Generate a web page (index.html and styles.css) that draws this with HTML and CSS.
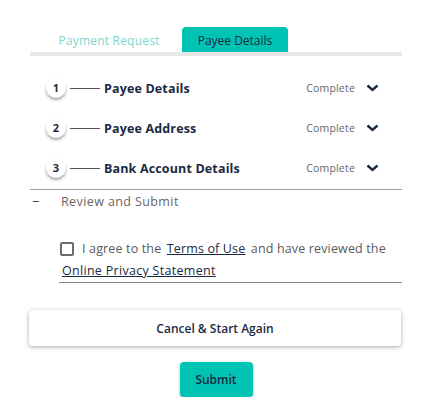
FILE: index.html
```html
<!DOCTYPE html>
<html lang="en">
<head>
  <meta charset="UTF-8">
  <meta name="viewport" content="width=device-width, initial-scale=1.0">
  <title>Payee Details</title>
  <link rel="stylesheet" href="styles.css">
</head>
<body>
  <div class="page">
    <div class="tabs">
      <div class="tab">Payment Request</div>
      <div class="tab active">Payee Details</div>
    </div>
    <div class="tab-bar"></div>

    <div class="steps">
      <div class="step">
        <span class="step-num">1</span>
        <span class="step-line"></span>
        <span class="step-title">Payee Details</span>
        <span class="step-status">Complete</span>
        <svg class="chevron" width="13" height="8" viewBox="0 0 13 8"><path d="M1.5 1.5 L6.5 6 L11.5 1.5" fill="none" stroke="#1b2a41" stroke-width="2.4"/></svg>
      </div>
      <div class="step">
        <span class="step-num">2</span>
        <span class="step-line"></span>
        <span class="step-title">Payee Address</span>
        <span class="step-status">Complete</span>
        <svg class="chevron" width="13" height="8" viewBox="0 0 13 8"><path d="M1.5 1.5 L6.5 6 L11.5 1.5" fill="none" stroke="#1b2a41" stroke-width="2.4"/></svg>
      </div>
      <div class="step">
        <span class="step-num">3</span>
        <span class="step-line"></span>
        <span class="step-title">Bank Account Details</span>
        <span class="step-status">Complete</span>
        <svg class="chevron" width="13" height="8" viewBox="0 0 13 8"><path d="M1.5 1.5 L6.5 6 L11.5 1.5" fill="none" stroke="#1b2a41" stroke-width="2.4"/></svg>
      </div>
    </div>

    <div class="review">
      <span class="dash">&minus;</span>
      <span>Review and Submit</span>
    </div>

    <div class="agree">
      <span class="checkbox"></span><span class="agree-text">I agree to the <a href="#">Terms of Use</a> and have reviewed the</span><br>
      <a href="#" class="privacy">Online Privacy Statement</a>
    </div>

    <button class="btn-cancel">Cancel &amp; Start Again</button>
    <div class="submit-row">
      <button class="btn-submit">Submit</button>
    </div>
  </div>
</body>
</html>
```

FILE: styles.css
```css
body {
  margin: 0;
  background: #fff;
  font-family: "Open Sans", "Noto Sans", sans-serif;
  color: #1b2a41;
}
.page {
  padding: 0 28px 0 30px;
}
.tabs {
  display: flex;
  gap: 20px;
  padding: 27px 0 0 26px;
}
.tab {
  width: 106px;
  height: 25px;
  line-height: 27px;
  text-align: center;
  font-size: 12px;
  letter-spacing: 0.2px;
  color: #7fd5c9;
}
.tab.active {
  background: #00c4b3;
  color: #1b2a41;
  letter-spacing: 0;
  border-radius: 4px 4px 0 0;
}
.tab-bar {
  height: 4px;
  background: #e8e8e8;
}
.steps {
  margin-top: 12px;
  border-bottom: 1px solid #9e9e9e;
  padding-bottom: 1px;
}
.step {
  display: flex;
  align-items: center;
  height: 40px;
  padding: 0 23px 0 16px;
}
.step-num {
  width: 20px;
  height: 20px;
  border-radius: 50%;
  background: #fff;
  box-shadow: 0 2px 3px rgba(0, 0, 0, 0.35);
  font-size: 11px;
  font-weight: 700;
  text-align: center;
  line-height: 19px;
}
.step-line {
  width: 30px;
  height: 1px;
  background: #555;
  margin: 0 4px;
}
.step-title {
  flex: 1;
  font-size: 12.5px;
  font-weight: 700;
  letter-spacing: 0.15px;
}
.step-status {
  font-size: 10.5px;
  letter-spacing: 0.2px;
  color: #5f6570;
  margin-right: 11px;
}
.chevron {
  display: block;
}
.review {
  display: flex;
  align-items: center;
  height: 21px;
  margin-top: 1px;
  font-size: 12.5px;
  letter-spacing: 0.4px;
  color: #6b6560;
}
.dash {
  width: 29px;
  color: #1b2a41;
  padding-left: 2px;
}
.agree {
  margin: 26px 0 0 29px;
  font-size: 12.5px;
  letter-spacing: 0.3px;
  line-height: 22px;
  color: #5a5a5a;
  border-bottom: 1px solid #888;
}
.agree-text {
  letter-spacing: 0.15px;
}
.checkbox {
  display: inline-block;
  width: 10px;
  height: 10px;
  border: 2px solid #6b6b6b;
  border-radius: 2px;
  vertical-align: -3px;
  margin: 0 8px 0 1px;
}
.agree a {
  color: #1b2a41;
  margin: 0 2px;
}
.agree a.privacy {
  margin: 0 0 0 3px;
}
.btn-cancel {
  display: block;
  width: 100%;
  height: 36px;
  margin-top: 27px;
  margin-left: -1px;
  border: none;
  border-radius: 4px;
  background: #fff;
  box-shadow: 0 1px 4px rgba(0, 0, 0, 0.35);
  font-family: inherit;
  font-size: 12px;
  font-weight: 600;
  color: #1b2a41;
}
.submit-row {
  display: flex;
  justify-content: center;
  margin-top: 16px;
}
.btn-submit {
  width: 73px;
  height: 35px;
  border: none;
  border-radius: 4px;
  background: #00c4b3;
  box-shadow: 0 1px 3px rgba(0, 0, 0, 0.3);
  font-family: inherit;
  font-size: 12px;
  font-weight: 600;
  color: #1b2a41;
}
```
